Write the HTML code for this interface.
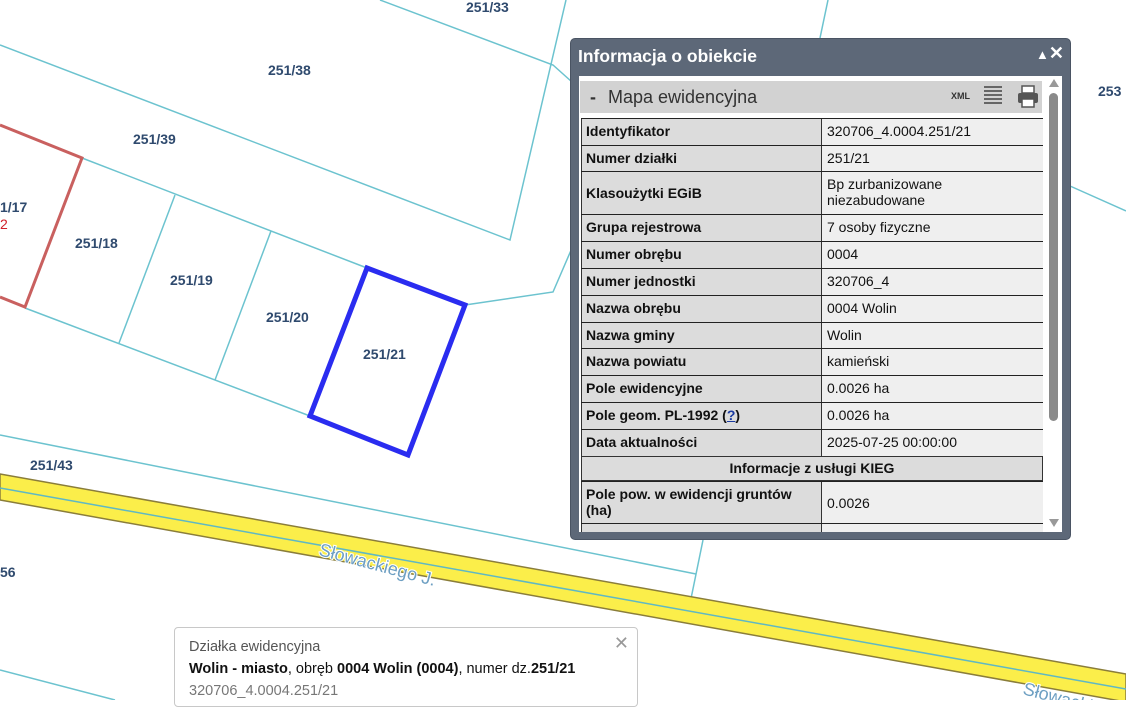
<!DOCTYPE html>
<html><head><meta charset="utf-8"><style>
*{margin:0;padding:0;box-sizing:border-box}
body{width:1126px;height:700px;overflow:hidden;position:relative;background:#fff;font-family:"Liberation Sans",sans-serif}
svg{position:absolute;left:0;top:0}
#panel{position:absolute;left:570px;top:38px;width:501px;height:502px;background:#5d6878;border-radius:5px;border:1px solid #4a5463}
#title{position:absolute;left:7px;top:7px;color:#fff;font-weight:bold;font-size:17.5px}
#ctl{position:absolute;right:6px;top:4px;color:#fff;font-size:18px;font-weight:bold}
#inner{position:absolute;left:8px;top:37px;width:483px;height:456px;background:#fff;overflow:hidden}
#hdr{position:absolute;left:1px;top:5px;width:462px;height:32px;background:#d2d2d2}
#hdr .t{position:absolute;left:10px;top:6px;font-size:18px;color:#333}
.row{position:absolute;left:2px;width:462px;border-top:1px solid #222;font-size:14px;color:#111}
.row .l{position:absolute;left:0;top:0;bottom:0;width:241px;background:#dcdcdc;border-left:1px solid #333;border-right:1px solid #333;font-weight:bold;padding:4px 4px;line-height:16px}
.row .v{position:absolute;left:241px;top:0;bottom:0;right:0;background:#efefef;padding:4px 5px;line-height:16px}
#sb{position:absolute;left:468px;top:0;width:14px;height:456px;background:#fff}
#pop{position:absolute;left:174px;top:627px;width:464px;height:80px;background:#fff;border:1px solid #c8c8c8;border-radius:4px;font-size:14.5px;padding:8px 14px;line-height:22px}
</style></head><body>
<svg width="1126" height="700">
<g fill="none" stroke="#6cc3cf" stroke-width="1.5">
<polyline points="380,0 553,65 572,82"/>
<polyline points="566,0 510,240 0,45"/>
<polyline points="82,158 367,268"/>
<polyline points="25,308 310,416"/>
<line x1="175" y1="195" x2="119" y2="343"/>
<line x1="271" y1="231" x2="215" y2="380"/>
<polyline points="465,305 553,292 572,248"/>
<polyline points="0,435 696,574"/>
<line x1="703" y1="540" x2="686" y2="623"/>
<line x1="0" y1="670" x2="115" y2="700"/>
<line x1="828" y1="0" x2="820" y2="38"/>
<line x1="1070" y1="186" x2="1126" y2="211"/>
</g>
<polygon points="0,474 1126,674 1126,702 0,500" fill="#fbee4a" stroke="#8a7d3a" stroke-width="1.5"/>
<line x1="0" y1="488" x2="1126" y2="689" stroke="#5fb8c4" stroke-width="1.5"/>
<polyline points="0,125 82,158 25,307 0,297" fill="none" stroke="#c9605f" stroke-width="3"/>
<polygon points="367,268 465,305 408,455 310,416" fill="none" stroke="#2a2cf0" stroke-width="5"/>
<g font-family="Liberation Sans" font-weight="bold" font-size="14" fill="#2f4a6e">
<text x="466" y="12">251/33</text><text x="268" y="75">251/38</text><text x="133" y="144">251/39</text>
<text x="0" y="212">1/17</text><text x="75" y="248">251/18</text><text x="170" y="285">251/19</text>
<text x="266" y="322">251/20</text><text x="363" y="359">251/21</text><text x="30" y="470">251/43</text>
<text x="0" y="577">56</text><text x="1098" y="96">253</text>
</g>
<text x="0" y="229" font-family="Liberation Sans" font-size="14" fill="#d0202a">2</text>
<g font-family="Liberation Sans" font-size="18" fill="#6d9fc2" stroke="#fff" stroke-width="2" paint-order="stroke">
<text x="318" y="555" transform="rotate(15 318 555)">Słowackiego J.</text>
<text x="1022" y="694" transform="rotate(15 1022 694)">Słowackiego</text>
</g>
</svg>
<div id="panel">
<div id="title">Informacja o obiekcie</div>
<div id="ctl"><span style="font-size:13px">▲</span>✕</div>
<div id="inner">
<div id="hdr"><div class="t"><b style="margin-right:12px">-</b>Mapa ewidencyjna</div>
<div style="position:absolute;left:371px;top:10px;font-size:9px;font-weight:bold;color:#333">XML</div>
<div style="position:absolute;left:404px;top:5px;width:18px;height:20px;background:repeating-linear-gradient(#666 0 2px,transparent 2px 4px)"></div>
<svg style="left:437px;top:4px" width="22" height="24" viewBox="0 0 22 24"><rect x="5" y="1" width="12" height="7" fill="#fff" stroke="#555" stroke-width="1.5"/><rect x="1" y="8" width="20" height="10" rx="2" fill="#555"/><rect x="5" y="14" width="12" height="8" fill="#fff" stroke="#555" stroke-width="1.5"/></svg>
</div>
<div class="row" style="top:42px;height:27px"><div class="l">Identyfikator</div><div class="v">320706_4.0004.251/21</div></div>
<div class="row" style="top:69px;height:26px"><div class="l">Numer działki</div><div class="v">251/21</div></div>
<div class="row" style="top:95px;height:43px"><div class="l" style="padding-top:13px">Klasoużytki EGiB</div><div class="v">Bp zurbanizowane niezabudowane</div></div>
<div class="row" style="top:138px;height:27px"><div class="l">Grupa rejestrowa</div><div class="v">7 osoby fizyczne</div></div>
<div class="row" style="top:165px;height:27px"><div class="l">Numer obrębu</div><div class="v">0004</div></div>
<div class="row" style="top:192px;height:27px"><div class="l">Numer jednostki</div><div class="v">320706_4</div></div>
<div class="row" style="top:219px;height:27px"><div class="l">Nazwa obrębu</div><div class="v">0004 Wolin</div></div>
<div class="row" style="top:246px;height:26px"><div class="l">Nazwa gminy</div><div class="v">Wolin</div></div>
<div class="row" style="top:272px;height:27px"><div class="l">Nazwa powiatu</div><div class="v">kamieński</div></div>
<div class="row" style="top:299px;height:27px"><div class="l">Pole ewidencyjne</div><div class="v">0.0026 ha</div></div>
<div class="row" style="top:326px;height:27px"><div class="l">Pole geom. PL-1992 (<u style="color:#1a3aa0">?</u>)</div><div class="v">0.0026 ha</div></div>
<div class="row" style="top:353px;height:27px"><div class="l">Data aktualności</div><div class="v">2025-07-25 00:00:00</div></div>
<div class="row" style="top:380px;height:25px;background:#dcdcdc;border:1px solid #333;text-align:center;font-weight:bold;line-height:23px">Informacje z usługi KIEG</div>
<div class="row" style="top:405px;height:42px"><div class="l">Pole pow. w ewidencji gruntów (ha)</div><div class="v" style="padding-top:13px">0.0026</div></div>
<div class="row" style="top:447px;height:20px"><div class="l"></div><div class="v"></div></div>
<div id="sb"><div style="position:absolute;left:2px;top:3px;width:0;height:0;border-left:5px solid transparent;border-right:5px solid transparent;border-bottom:8px solid #999"></div>
<div style="position:absolute;left:2px;top:17px;width:9px;height:328px;background:#8a8a8a;border-radius:5px"></div>
<div style="position:absolute;left:2px;top:443px;width:0;height:0;border-left:5px solid transparent;border-right:5px solid transparent;border-top:8px solid #999"></div></div>
</div></div>
<div id="pop">
<div style="position:absolute;right:8px;top:4px;color:#999;font-size:18px">✕</div>
<div style="color:#555">Działka ewidencyjna</div>
<div style="color:#111"><b>Wolin - miasto</b>, obręb <b>0004 Wolin (0004)</b>, numer dz.<b>251/21</b></div>
<div style="color:#777">320706_4.0004.251/21</div>
</div>
</body></html>
